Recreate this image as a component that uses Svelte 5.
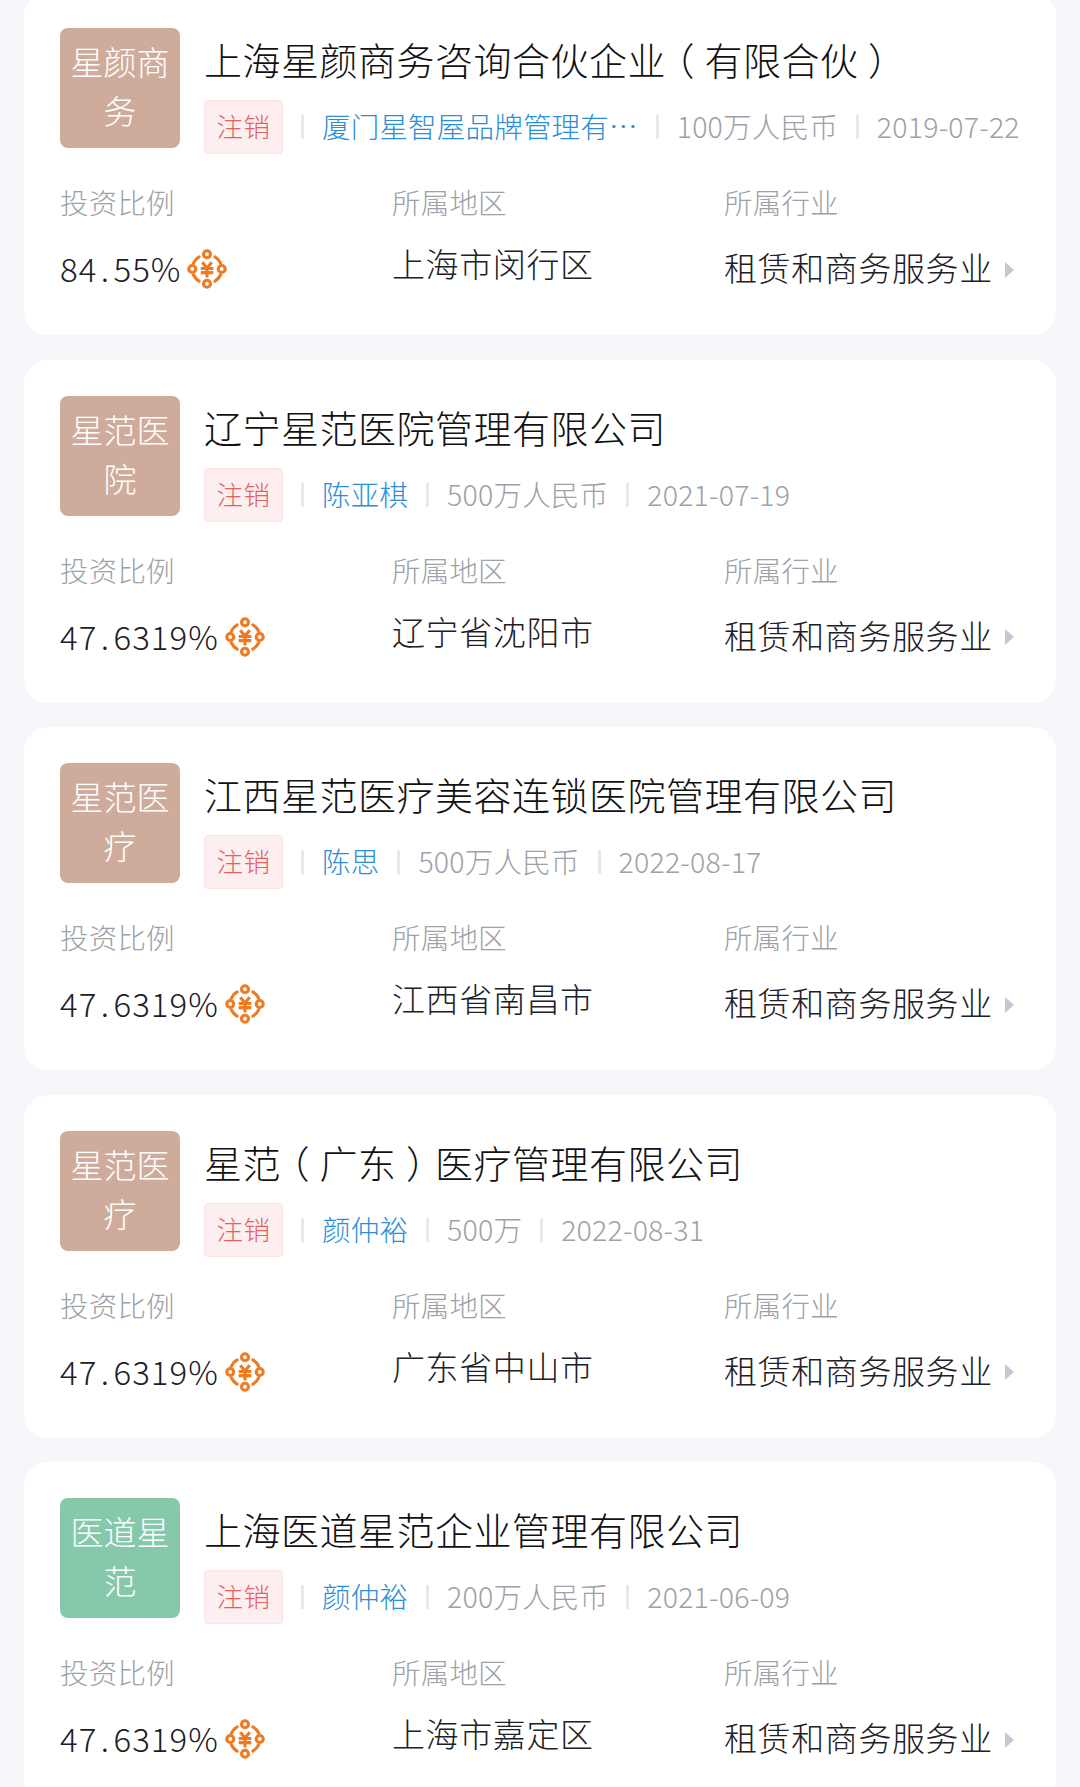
<script>
	const cards = [
		{ logo: '星颜商务', color: '#cfab9b', title: '上海星颜商务咨询合伙企业（有限合伙）', person: '厦门星智屋品牌管理有…', capital: '100万人民币', date: '2019-07-22', ratio: '84.55%', region: '上海市闵行区' },
		{ logo: '星范医院', color: '#cfab9b', title: '辽宁星范医院管理有限公司', person: '陈亚棋', capital: '500万人民币', date: '2021-07-19', ratio: '47.6319%', region: '辽宁省沈阳市' },
		{ logo: '星范医疗', color: '#cfab9b', title: '江西星范医疗美容连锁医院管理有限公司', person: '陈思', capital: '500万人民币', date: '2022-08-17', ratio: '47.6319%', region: '江西省南昌市' },
		{ logo: '星范医疗', color: '#cfab9b', title: '星范（广东）医疗管理有限公司', person: '颜仲裕', capital: '500万', date: '2022-08-31', ratio: '47.6319%', region: '广东省中山市' },
		{ logo: '医道星范', color: '#85c8aa', title: '上海医道星范企业管理有限公司', person: '颜仲裕', capital: '200万人民币', date: '2021-06-09', ratio: '47.6319%', region: '上海市嘉定区' }
	];

	const titleParts = (title) => title.split(/([（）])/).filter(Boolean);
</script>

<div class="page">
	{#each cards as card}
		<section class="card">
			<div class="head">
				<div class="logo" style="background: {card.color}">{card.logo}</div>
				<div class="info">
					<h2>
						{#each titleParts(card.title) as part}
							{#if part === '（' || part === '）'}<span class="paren">{part}</span>{:else}{part}{/if}
						{/each}
					</h2>
					<div class="meta">
						<span class="tag">注销</span>
						<i class="sep"></i>
						<span class="person">{card.person}</span>
						<i class="sep"></i>
						<span class="plain">{card.capital}</span>
						<i class="sep"></i>
						<span class="plain">{card.date}</span>
					</div>
				</div>
			</div>
			<div class="stats">
				<div>
					<div class="label">投资比例</div>
					<div class="value">
						<span class="ratio">{card.ratio.split('.')[0]}<span class="dot">.</span>{card.ratio.split('.')[1]}</span>
						<svg class="coin" viewBox="0 0 38 38" fill="none" stroke="#ee7a22" stroke-width="3" aria-hidden="true">
							<circle cx="19" cy="5" r="3.3" />
							<circle cx="19" cy="33" r="3.3" />
							<circle cx="5" cy="19" r="3.3" />
							<circle cx="33" cy="19" r="3.3" />
							<path d="M6 13.5 Q8 9.5 11.5 7.5 M26.5 7.5 Q30 9.5 32 13.5 M6 24.5 Q8 28.5 11.5 30.5 M32 24.5 Q30 28.5 26.5 30.5" stroke-linecap="round" />
							<path d="M14.5 12.5 L19 18 L23.5 12.5 M13 18.5 H25 M13 22.5 H25 M19 18 V27" />
						</svg>
					</div>
				</div>
				<div>
					<div class="label">所属地区</div>
					<div class="value region">{card.region}</div>
				</div>
				<div>
					<div class="label">所属行业</div>
					<div class="value">
						租赁和商务服务业
						<span class="arrow"></span>
					</div>
				</div>
			</div>
		</section>
	{/each}
</div>

<style>
	:global(body) {
		background: #f6f7fb;
		overflow: hidden;
	}

	.page {
		height: 1787px;
		overflow: hidden;
		padding: 0 24px;
		font-family: 'Noto Sans CJK SC', 'Noto Sans', sans-serif;
		font-weight: 200;
		box-sizing: border-box;
	}

	.card {
		height: 343px;
		margin-top: 24.5px;
		padding: 36px 36px 0;
		background: #fff;
		border-radius: 24px;
		box-sizing: border-box;
	}

	.card:first-child {
		margin-top: -8px;
	}

	.head {
		display: flex;
		gap: 24px;
	}

	.logo {
		flex: none;
		width: 120px;
		height: 120px;
		padding: 9px 8px;
		border-radius: 8px;
		box-sizing: border-box;
		color: #fff;
		font-size: 33px;
		line-height: 49px;
		text-align: center;
	}

	.info {
		min-width: 0;
		flex: 1;
	}

	h2 {
		margin: 6px 0 0;
		font-size: 38px;
		font-weight: 200;
		line-height: 50px;
		letter-spacing: 0.5px;
		color: #111;
		white-space: nowrap;
	}

	.paren {
		padding: 0 9.5px;
		font-feature-settings: 'halt';
	}

	.meta {
		display: flex;
		align-items: center;
		gap: 18px;
		margin-top: 16px;
		height: 54px;
		color: #9da1a8;
		font-size: 28.5px;
		line-height: 52px;
		white-space: nowrap;
	}

	.plain {
		flex: none;
		letter-spacing: 0.2px;
		margin-bottom: 2px;
	}

	.tag {
		flex: none;
		width: 79px;
		height: 54px;
		border: 1px solid #fbe3e3;
		border-radius: 4px;
		box-sizing: border-box;
		background: #fdefef;
		color: #e4605f;
		font-size: 26.5px;
		line-height: 50px;
		text-align: center;
		letter-spacing: 0.5px;
	}

	.sep {
		flex: none;
		width: 3px;
		height: 24px;
		background: #e6e9ee;
	}

	.person {
		flex: 0 1 auto;
		min-width: 0;
		color: #2c8ed6;
		letter-spacing: 0.2px;
		margin-bottom: 2px;
	}

	.stats {
		display: grid;
		grid-template-columns: 332px 332px 1fr;
		margin-top: 28px;
	}

	.label {
		color: #9da1a8;
		font-size: 28.5px;
		line-height: 40px;
		letter-spacing: 0.2px;
	}

	.value {
		display: flex;
		align-items: center;
		gap: 6px;
		margin-top: 21px;
		color: #1d2024;
		font-size: 33px;
		line-height: 48px;
		letter-spacing: 0.6px;
	}

	.ratio {
		letter-spacing: 1px;
		position: relative;
		top: 1px;
	}

	.region {
		margin-top: 17px;
	}

	.dot {
		padding: 0 3.5px;
	}

	.coin {
		width: 40px;
		height: 40px;
		margin-top: 4px;
	}

	.arrow {
		width: 0;
		height: 0;
		margin: 5px 0 0 6px;
		border-left: 9px solid #c2c8d6;
		border-top: 8px solid transparent;
		border-bottom: 8px solid transparent;
	}
</style>
